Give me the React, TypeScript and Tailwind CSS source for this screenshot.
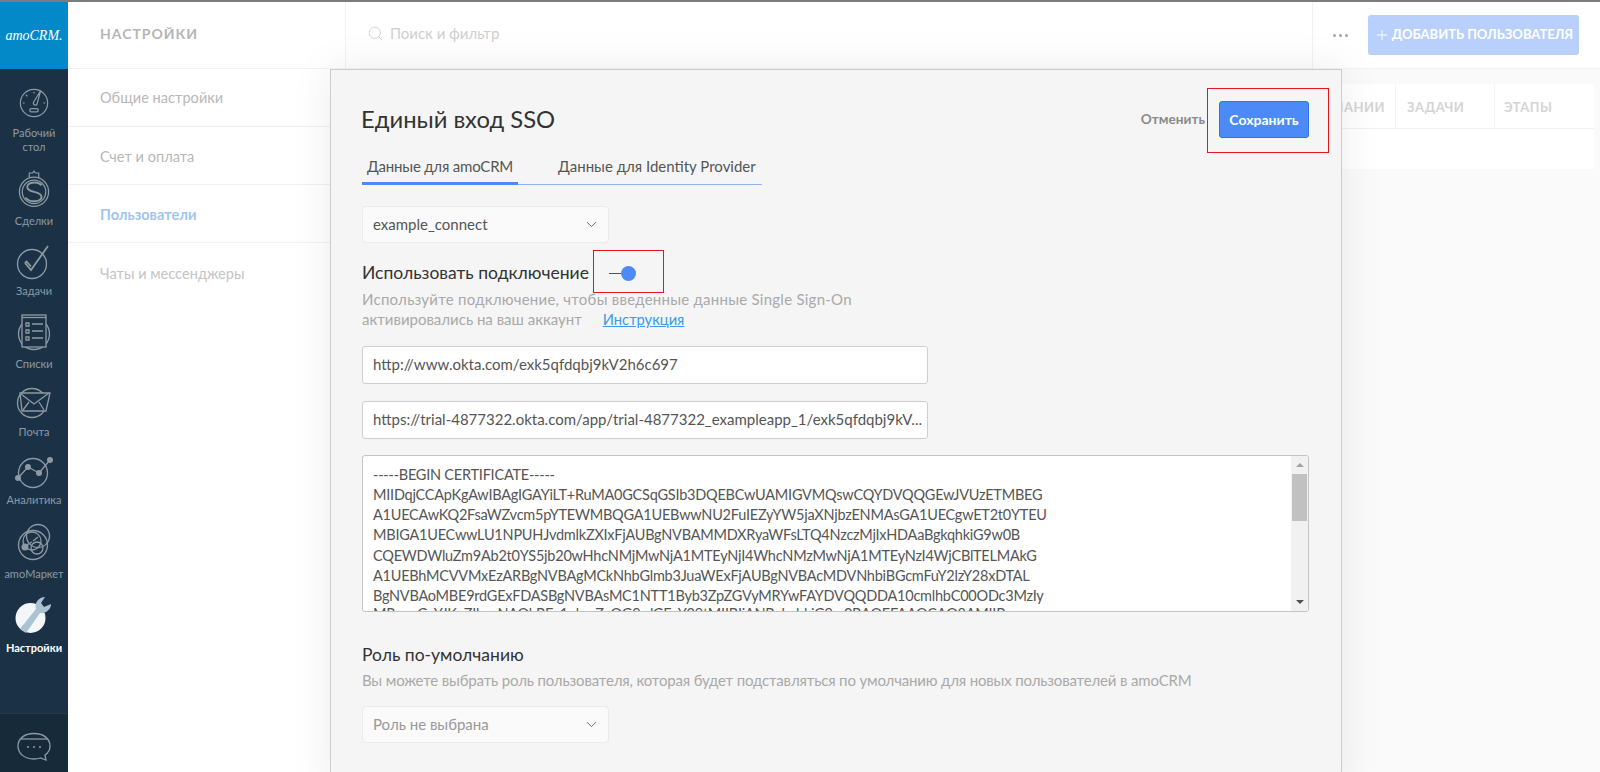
import React from "react";
import { ChevronDown, Search, Plus } from "lucide-react";

const S = { fill: "none", stroke: "#8e9aa3", strokeWidth: 1.3 } as const;

const IconDash = () => (
  <svg width="32" height="32" viewBox="0 0 34 34" {...S}>
    <circle cx="17" cy="17" r="14.5" />
    <path d="M24 4 L16 17 M24 4 L20 19 M16 17 Q17 20 20 19" />
    <rect x="12.5" y="23" width="9" height="3.5" rx="1.7" />
    <path d="M5 17h2M17 5v2M8.5 8.5l1.5 1.5M27 17h2" />
  </svg>
);
const IconDeal = () => (
  <svg width="32" height="38" viewBox="0 0 34 40" {...S}>
    <path d="M12 8 V3 h3.5 l1.5-2 1.5 2 H22 v5" />
    <circle cx="17" cy="23" r="15.5" />
    <circle cx="17" cy="23" r="12.5" />
    <path d="M25 16 C20 11 8 13 10 19 C12 24 24 22 25 28 C25 34 12 35 8 29" strokeWidth="2" />
  </svg>
);
const IconTask = () => (
  <svg width="36" height="36" viewBox="0 0 36 36" {...S}>
    <circle cx="16" cy="20" r="14.5" />
    <path d="M9 19 l6 7 L32 2 M9 19 l1.5-1.5 4.5 5" strokeWidth="1.8" />
  </svg>
);
const IconList = () => (
  <svg width="34" height="38" viewBox="0 0 34 38" {...S}>
    <circle cx="17" cy="21" r="15.5" />
    <rect x="5" y="2" width="24" height="32" fill="#1b3246" />
    <path d="M5 4.5h24" />
    <path d="M9 10h3v3H9zM9 17h3v3H9zM9 24h3v3H9z M15 11h11M15 18h11M15 25h11" />
  </svg>
);
const IconMail = () => (
  <svg width="36" height="32" viewBox="0 0 36 32" {...S}>
    <circle cx="16" cy="16" r="14.5" />
    <path d="M4 6 H34 L30 24 H6 Z" fill="#1b3246" />
    <path d="M5 7 L18 17 L33 6 M7 23 L13 15 M28 23 L23 15" />
  </svg>
);
const IconChart = () => (
  <svg width="42" height="34" viewBox="0 0 42 34" {...S}>
    <circle cx="20" cy="18" r="14.5" />
    <path d="M5 23 L15 12 L26 18 L37 5" />
    <g fill="#8e9aa3" stroke="none">
      <circle cx="5" cy="23" r="3" />
      <circle cx="15" cy="12" r="3" />
      <circle cx="26" cy="18" r="3" />
      <circle cx="37" cy="5" r="3" />
    </g>
  </svg>
);
const IconMarket = () => (
  <svg width="34" height="38" viewBox="0 0 34 38" {...S}>
    <circle cx="16" cy="22" r="14.5" />
    <circle cx="21" cy="13" r="11.5" />
    <circle cx="15" cy="18" r="9" />
    <circle cx="20" cy="25" r="6" />
    <path d="M16 18 l5-4 M8 23 l7-4" />
    <circle cx="8" cy="24" r="3.5" fill="#8e9aa3" stroke="none" />
  </svg>
);
const IconWrench = () => (
  <svg width="38" height="38" viewBox="0 0 38 38">
    <circle cx="15.5" cy="22" r="15" fill="#f4f7f9" />
    <path d="M5 33 L21 13 C19 7 24 1 30 1 L26 7 L29 11 L36 8 C36 14 30 18 25 17 L11 37 Z" fill="#a9c3d2" />
  </svg>
);
const IconChat = () => (
  <svg width="34" height="32" viewBox="0 0 34 32" {...S}>
    <path d="M17 1.5 C27 1.5 33 7 33 14 C33 18 31 21 28 23 L29 28 L23.5 26 C21.5 26.6 19.5 27 17 27 C7 27 1 21 1 14 C1 7 7 1.5 17 1.5 Z" />
    <path d="M4 7 H30" />
    <g fill="#8e9aa3" stroke="none">
      <circle cx="11" cy="15" r="1" />
      <circle cx="17" cy="15" r="1" />
      <circle cx="23" cy="15" r="1" />
    </g>
  </svg>
);

function NavItem({ icon, label, className, labelClass, active }: { icon: React.ReactNode; label: React.ReactNode; className: string; labelClass: string; active?: boolean }) {
  return (
    <div className={`flex flex-col items-center ${className}`}>
      <div className="flex h-[38px] items-center justify-center">{icon}</div>
      <div className={`text-center text-[11px] leading-[14px] ${labelClass} ${active ? "font-bold text-white" : "text-[#8d9aa4]"}`}>{label}</div>
    </div>
  );
}

const CERT = [
  "-----BEGIN CERTIFICATE-----",
  "MIIDqjCCApKgAwIBAgIGAYiLT+RuMA0GCSqGSIb3DQEBCwUAMIGVMQswCQYDVQQGEwJVUzETMBEG",
  "A1UECAwKQ2FsaWZvcm5pYTEWMBQGA1UEBwwNU2FuIEZyYW5jaXNjbzENMAsGA1UECgwET2t0YTEU",
  "MBIGA1UECwwLU1NPUHJvdmlkZXIxFjAUBgNVBAMMDXRyaWFsLTQ4NzczMjIxHDAaBgkqhkiG9w0B",
  "CQEWDWluZm9Ab2t0YS5jb20wHhcNMjMwNjA1MTEyNjI4WhcNMzMwNjA1MTEyNzI4WjCBlTELMAkG",
  "A1UEBhMCVVMxEzARBgNVBAgMCkNhbGlmb3JuaWExFjAUBgNVBAcMDVNhbiBGcmFuY2lzY28xDTAL",
  "BgNVBAoMBE9rdGExFDASBgNVBAsMC1NTT1Byb3ZpZGVyMRYwFAYDVQQDDA10cmlhbC00ODc3MzIy",
  "MRwwGgYJKoZIhvcNAQkBFg1pbmZvQG9rdGEuY29tMIIBIjANBgkqhkiG9w0BAQEFAAOCAQ8AMIIB",
];

export default function App() {
  return (
    <div className="relative h-[772px] w-[1600px] overflow-hidden bg-white font-['Lato','Roboto',sans-serif] text-[15px]">
      <div className="h-0.5 bg-[#7d7d7d]" />
      <div className="flex h-[770px]">
        {/* sidebar */}
        <aside className="flex w-[68px] shrink-0 flex-col bg-[#1b3246]">
          <div className="flex h-[67px] items-center justify-center bg-[#0389c8] font-['Liberation_Serif',serif] text-[14px] italic text-white">amoCRM.</div>
          <NavItem className="mt-[15px]" labelClass="mt-[4px]" icon={<IconDash />} label={<>Рабочий<br />стол</>} />
          <NavItem className="mt-[16px]" labelClass="mt-[6px]" icon={<IconDeal />} label="Сделки" />
          <NavItem className="mt-[15px]" labelClass="mt-[3px]" icon={<IconTask />} label="Задачи" />
          <NavItem className="mt-[15px]" labelClass="mt-[6px]" icon={<IconList />} label="Списки" />
          <NavItem className="mt-[13px]" labelClass="mt-[3px]" icon={<IconMail />} label="Почта" />
          <NavItem className="mt-[14px]" labelClass="mt-[2px]" icon={<IconChart />} label="Аналитика" />
          <NavItem className="mt-[16px]" labelClass="mt-[6px]" icon={<IconMarket />} label="amoМаркет" />
          <NavItem className="mt-[15px]" labelClass="mt-[7px]" active icon={<IconWrench />} label="Настройки" />
          <div className="mt-auto flex h-[59px] items-start justify-center border-t border-[#24394c] bg-[#162a3a] pt-[18px]">
            <IconChat />
          </div>
        </aside>

        {/* settings menu */}
        <nav className="w-[277px] shrink-0 text-[14.6px]">
          <div className="flex h-[67px] items-center border-b border-[#f2f2f2] pb-1 pl-[32px] text-[14px] font-bold tracking-[1px] text-[#b5b5b5]">НАСТРОЙКИ</div>
          <div className="flex h-[58px] items-center border-b border-[#f2f2f2] pl-[32px] pt-[1px] text-[#b8b8b8]">Общие настройки</div>
          <div className="flex h-[58px] items-center border-b border-[#f2f2f2] pl-[32px] pt-[3px] text-[#b8b8b8]">Счет и оплата</div>
          <div className="flex h-[58px] items-center border-b border-[#f2f2f2] pl-[32px] pt-[3px] font-bold text-[#9fc5ef]">Пользователи</div>
          <div className="flex h-[58px] items-center pl-[32px] pt-[3px] text-[#c4c4c4]">Чаты и мессенджеры</div>
        </nav>

        {/* main background */}
        <main className="flex min-w-0 flex-1 flex-col bg-[#fafafa]">
          <div className="flex h-[67px] shrink-0 items-center border-b border-l border-[#f2f2f2] bg-white">
            <div className="flex flex-1 items-center pb-1 pl-[21px] text-[15px] text-[#cfcfcf]">
              <Search size={17} strokeWidth={1.3} className="mr-1.5 text-[#cfcfcf]" />
              Поиск и фильтр
            </div>
            <div className="flex h-full w-[288px] items-center border-l border-[#f2f2f2] pl-[20px]">
              <span className="mr-[20px] flex gap-[3px]">
                <i className="h-[3px] w-[3px] rounded-full bg-[#a5a5a5]" />
                <i className="h-[3px] w-[3px] rounded-full bg-[#a5a5a5]" />
                <i className="h-[3px] w-[3px] rounded-full bg-[#a5a5a5]" />
              </span>
              <div className="flex h-[40px] w-[211px] items-center justify-center rounded-[3px] bg-[#b8d0fb] text-[13px] font-bold text-white">
                <Plus size={16} strokeWidth={1.5} className="mr-0.5" />
                ДОБАВИТЬ ПОЛЬЗОВАТЕЛЯ
              </div>
            </div>
          </div>
          <div className="ml-auto mr-[6px] mt-[15px] w-[260px]">
            <div className="flex h-[45px] items-center border-b border-[#f2f2f2] bg-white text-[13px] font-bold tracking-[0.5px] text-[#d4d4d4]">
              <div className="flex h-full w-[62px] items-center justify-end border-r border-[#f4f4f4] pr-[10px] pt-1">ПАНИИ</div>
              <div className="flex h-full w-[99px] items-center border-r border-[#f4f4f4] pl-[11px] pt-1">ЗАДАЧИ</div>
              <div className="pl-[9px] pt-1">ЭТАПЫ</div>
            </div>
            <div className="h-[40px] bg-white" />
          </div>
        </main>
      </div>

      {/* modal */}
      <section className="absolute left-[330px] top-[69px] h-[720px] w-[1012px] border border-b-0 border-[#cdcdcd] bg-[#f5f5f5] pl-[31px] text-[#333] shadow-[0_0_40px_rgba(0,0,0,0.08)]">
        <div className="flex items-start">
          <h1 className="-ml-px mt-[34px] text-[23.8px] font-normal leading-[30px] text-[#333]">Единый вход SSO</h1>
          <div className="ml-auto mr-[32px] mt-[31px] flex items-center">
            <span className="mr-[14px] text-[13.6px] font-bold text-[#8a8a8a]">Отменить</span>
            <button className="h-[37px] w-[90px] rounded-[3px] border border-[#2f74e8] bg-[#4c8bf5] text-[14px] font-bold text-white">Сохранить</button>
          </div>
        </div>

        <div className="mt-[10px] flex w-[400px] border-b border-[#8fb2f2] text-[15px] text-[#555]">
          <div className="-mb-px w-[156px] border-b-[3px] border-[#4c8bf5] pb-[4px] pl-[5px] pt-[7px] tracking-[-0.2px]">Данные для amoCRM</div>
          <div className="pl-[40px] pt-[7px]">Данные для Identity Provider</div>
        </div>

        <div className="mt-[21px] flex h-[37px] w-[247px] items-center justify-between rounded-[4px] border border-[#ebebeb] bg-[#fafafa] pl-[10px] pr-[8px] text-[15px] text-[#555]">
          example_connect
          <ChevronDown size={17} strokeWidth={1.2} />
        </div>

        <div className="mt-[19px] flex h-[24px] items-center text-[17.5px] text-[#333]">
          Использовать подключение
          <span className="ml-[20px] h-[1.5px] w-[12px] bg-[#555]" />
          <span className="h-[15px] w-[15px] rounded-full bg-[#4c8bf5]" />
        </div>
        <p className="mt-[3px] w-[540px] text-[15px] leading-[20px] text-[#a9a9a9]">
          <span className="tracking-[0.25px]">Используйте подключение, чтобы введенные данные Single Sign-On</span>
          <br />
          активировались на ваш аккаунт
          <a className="ml-[21px] text-[14.7px] text-[#3a9bef] underline">Инструкция</a>
        </p>

        <div className="mt-[17px] flex h-[38px] w-[566px] items-center rounded-[3px] border border-[#cfcfcf] bg-white px-[10px] text-[15px] text-[#555]">http://www.okta.com/exk5qfdqbj9kV2h6c697</div>
        <div className="mt-[17px] flex h-[38px] w-[566px] items-center overflow-hidden whitespace-nowrap rounded-[3px] border border-[#cfcfcf] bg-white px-[10px] text-[15px] text-[#555]">https://trial-4877322.okta.com/app/trial-4877322_exampleapp_1/exk5qfdqbj9kV...</div>

        <div className="mt-[16px] flex h-[157px] w-[947px] overflow-hidden rounded-[3px] border border-[#c4c4c4] bg-white">
          <div className="flex-1 overflow-hidden whitespace-nowrap pl-[10px] pt-[9px] text-[14.5px] leading-[20.3px] tracking-[-0.23px] text-[#555]">
            {CERT.map((l) => (
              <div key={l} className="last:-mt-[3px]">{l}</div>
            ))}
          </div>
          <div className="relative w-[17px] shrink-0 bg-[#f1f1f1]">
            <span className="absolute left-[5px] top-[7px] h-0 w-0 border-x-[4px] border-b-[4px] border-x-transparent border-b-[#a3a3a3]" />
            <span className="absolute left-[1px] top-[18px] h-[47px] w-[15px] bg-[#c1c1c1]" />
            <span className="absolute bottom-[7px] left-[5px] h-0 w-0 border-x-[4px] border-t-[4px] border-x-transparent border-t-[#505050]" />
          </div>
        </div>

        <h2 className="mt-[31px] text-[17.5px] font-normal leading-[24px] text-[#333]">Роль по-умолчанию</h2>
        <p className="mt-[3px] text-[15px] leading-[21px] tracking-[-0.16px] text-[#a9a9a9]">Вы можете выбрать роль пользователя, которая будет подставляться по умолчанию для новых пользователей в amoCRM</p>
        <div className="mt-[15px] flex h-[37px] w-[247px] items-center justify-between rounded-[4px] border border-[#ebebeb] bg-[#fafafa] pl-[10px] pr-[8px] text-[15px] text-[#999]">
          Роль не выбрана
          <ChevronDown size={17} strokeWidth={1.2} className="text-[#555]" />
        </div>
      </section>

      {/* annotation frames */}
      <div className="absolute left-[1207px] top-[88px] h-[65px] w-[122px] border border-[#e8141c]" />
      <div className="absolute left-[593px] top-[250px] h-[43px] w-[71px] border border-[#e8141c]" />
    </div>
  );
}
